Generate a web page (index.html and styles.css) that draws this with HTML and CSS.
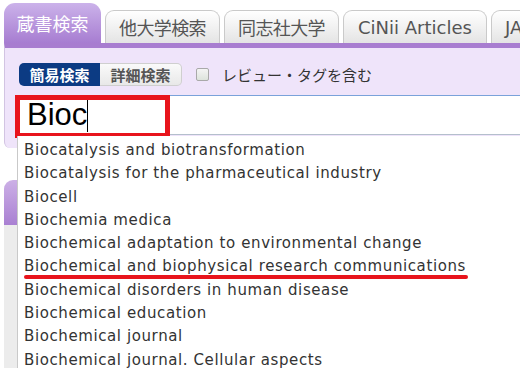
FILE: index.html
```html
<!DOCTYPE html>
<html lang="ja">
<head>
    <meta charset="UTF-8">
    <title>蔵書検索</title>

    <link rel="stylesheet" href="styles.css">

</head>
<body>

<div class="page">
    <ul class="tabs">
        <li class="tab tab-active">蔵書検索</li>
        <li class="tab tab-mid">他大学検索</li>
        <li class="tab tab-mid">同志社大学</li>
        <li class="tab tab-wide">CiNii Articles</li>
        <li class="tab tab-last">JAIRO</li>
    </ul>

    <div class="panel">
        <div class="toolbar">
            <div class="mode">
                <span class="mode-btn mode-on">簡易検索</span>
                <span class="mode-btn">詳細検索</span>
            </div>
            <label class="check"><span class="check-box"></span>レビュー・タグを含む</label>
        </div>
        <div class="search">
            <div class="query">Bioc<span class="caret"></span></div>
            <!-- annotation box -->
            <div class="mark-box"></div>
        </div>
    </div>

    <div class="section">
        <div class="section-head"></div>
        <div class="section-body"></div>
    </div>

    <ul class="suggest">
        <li>Biocatalysis and biotransformation</li>
        <li>Biocatalysis for the pharmaceutical industry</li>
        <li>Biocell</li>
        <li>Biochemia medica</li>
        <li>Biochemical adaptation to environmental change</li>
        <li class="marked">Biochemical and biophysical research communications<span class="mark-line"></span></li>
        <li>Biochemical disorders in human disease</li>
        <li>Biochemical education</li>
        <li>Biochemical journal</li>
        <li>Biochemical journal. Cellular aspects</li>
    </ul>
</div>

</body>
</html>
```

FILE: styles.css
```css
html, body {
    padding: 0;
    margin: 0;
    background: white;
    font-family: "DejaVu Sans", "Noto Sans CJK JP", sans-serif;
}

.page {
    position: relative;
    width: 520px;
    height: 368px;
    overflow: hidden;
    padding-left: 4px;
    box-sizing: border-box;
}

/* tabs */
.tabs {
    list-style: none;
    margin: 0;
    padding: 0;
    height: 43px;
    display: flex;
    align-items: flex-end;
    gap: 4px;
    white-space: nowrap;
}

.tab {
    box-sizing: border-box;
    height: 33px;
    flex-shrink: 0;
    display: flex;
    align-items: center;
    justify-content: center;
    font-size: 18px;
    color: #555;
    border: 1px solid #cacaca;
    border-bottom: 0;
    border-radius: 9px 9px 0 0;
    background: linear-gradient(#ffffff, #e4e4e4);
}

.tab.tab-active {
    width: 97px;
    height: 40px;
    color: white;
    border: 0;
    border-radius: 11px 11px 0 0;
    background: linear-gradient(#cbb2ea, #a77dd1);
}

.tab.tab-mid {
    width: 115px;
    letter-spacing: -0.6px;
}

.tab.tab-wide {
    width: 144px;
}

.tab.tab-last {
    width: 90px;
    justify-content: flex-start;
    padding-left: 13px;
}

/* panel */
.panel {
    width: 600px;
    height: 105px;
    box-sizing: border-box;
    border-top: 5px solid #a87dd0;
    border-left: 1px solid #d2c4e2;
    border-bottom-left-radius: 6px;
    background: #efe4fa;
    padding: 15px 0 0 12px;
}

.toolbar {
    display: flex;
    align-items: center;
    height: 23px;
    padding-left: 2px;
}

.mode {
    display: flex;
    height: 23px;
}

.mode-btn {
    box-sizing: border-box;
    width: 82px;
    display: flex;
    align-items: center;
    justify-content: center;
    font-size: 15px;
    font-weight: bold;
    color: #555;
    background: linear-gradient(#fafafa, #e8e8e8);
    border: 1px solid #cfcfcf;
    border-left: 0;
    border-radius: 0 5px 5px 0;
}

.mode-btn.mode-on {
    width: 81px;
    color: white;
    background: #0c3b83;
    border: 0;
    border-radius: 5px 0 0 5px;
}

.check {
    display: flex;
    align-items: center;
    margin-left: 14px;
    font-size: 15px;
    color: #333;
}

.check-box {
    width: 11px;
    height: 11px;
    border: 1px solid #a9a9a9;
    border-radius: 2px;
    background: linear-gradient(#f4f4f4, #dde3dc);
    margin-right: 13px;
}

/* search field */
.search {
    position: relative;
    margin-top: 9px;
    height: 40px;
    box-sizing: border-box;
    background: white;
    border-top: 1px solid #7aa2da;
    border-bottom: 1px solid #b4bfcc;
}

.query {
    display: flex;
    align-items: center;
    height: 38px;
    padding-left: 10px;
    font-family: "Liberation Sans", sans-serif;
    font-size: 31px;
    color: black;
}

.caret {
    width: 1px;
    height: 34px;
    background: black;
}

.mark-box {
    position: absolute;
    left: -2px;
    top: -1px;
    width: 155px;
    height: 43px;
    box-sizing: border-box;
    border: 5px solid #e8141c;
}

/* area under the panel */
.section {
    margin-top: 32px;
}

.section-head {
    height: 45px;
    border-top-left-radius: 9px;
    background: linear-gradient(#ccb0e6, #a980d2);
}

.section-body {
    height: 200px;
    background: #ececec;
}

/* suggestions */
.suggest {
    position: absolute;
    left: 17px;
    top: 136px;
    width: 520px;
    height: 240px;
    margin: 0;
    padding: 3px 0 0 6px;
    list-style: none;
    background: white;
    border-left: 1px solid #c9c9c9;
    font-size: 15px;
    letter-spacing: 0.6px;
    line-height: 23.3px;
    color: #333;
    white-space: nowrap;
}

.suggest li {
    position: relative;
}

.mark-line {
    position: absolute;
    left: 0;
    top: 20px;
    width: 444px;
    height: 4px;
    border-radius: 2px;
    background: #e8141c;
}
```
